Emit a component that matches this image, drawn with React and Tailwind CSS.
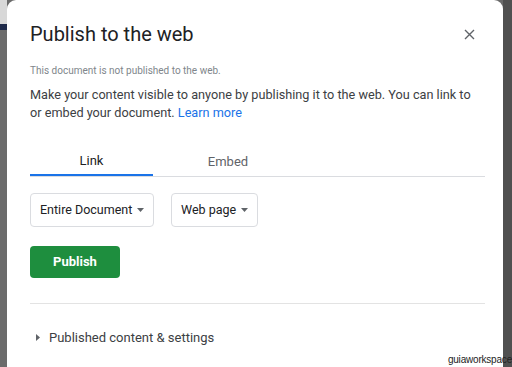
import React from "react";

function Caret() {
  return (
    <svg width="7" height="4" viewBox="0 0 7 4">
      <path d="M0 0h7L3.5 4z" fill="#5f6368" />
    </svg>
  );
}

function Dropdown({ label, width }) {
  return (
    <div
      className={`h-[34px] ${width} border border-[#dadce0] rounded-[4px] flex items-center justify-between pl-[9px] pr-[9px] text-[12.5px] text-[#202124] whitespace-nowrap`}
    >
      <span>{label}</span>
      <Caret />
    </div>
  );
}

export default function App() {
  return (
    <div
      className="relative w-[512px] h-[367px] flex bg-[#6b6b6b] overflow-hidden"
      style={{ fontFamily: "Roboto, 'Liberation Sans', sans-serif" }}
    >
      <div className="w-[7px] shrink-0 flex flex-col">
        <div className="h-[24px] bg-[#d8d8d8]" />
        <div className="h-[6px] bg-[#1f2a4a]" />
        <div className="flex-1 bg-[#6b6b6b]" />
      </div>

      <div className="w-[496px] shrink-0 bg-white rounded-t-[9px] pl-[23px] pr-[18px] flex flex-col">
        <div className="flex items-center justify-between pt-[20px]">
          <h1 className="text-[20px] leading-[28px] text-[#202124]">Publish to the web</h1>
          <svg width="11" height="11" viewBox="0 0 11 11" className="mr-[10px]">
            <path d="M1 1l9 9M10 1l-9 9" stroke="#5f6368" strokeWidth="1.4" />
          </svg>
        </div>

        <p className="mt-[16px] text-[10px] leading-[14px] text-[#80868b]">
          This document is not published to the web.
        </p>

        <p className="mt-[8px] text-[12.7px] leading-[18px] text-[#3c4043] whitespace-nowrap">
          Make your content visible to anyone by publishing it to the web. You can link to
          <br />
          or embed your document. <span className="text-[#1a73e8]">Learn more</span>
        </p>

        <div className="mt-[25px] flex border-b border-[#dadce0]">
          <div className="w-[123px] h-[29px] flex items-center justify-center text-[13px] text-[#202124] border-b-2 border-[#1a73e8] -mb-px">
            Link
          </div>
          <div className="w-[150px] h-[29px] flex items-center justify-center text-[13px] text-[#5f6368]">
            Embed
          </div>
        </div>

        <div className="mt-[16px] flex gap-[17px]">
          <Dropdown label="Entire Document" width="w-[124px]" />
          <Dropdown label="Web page" width="w-[87px]" />
        </div>

        <button className="mt-[19px] w-[90px] h-[32px] rounded-[4px] bg-[#1e8e3e] text-white text-[13px] font-bold">
          Publish
        </button>

        <div className="mt-[25px] h-px bg-[#e3e3e3]" />

        <div className="mt-[24px] flex items-center text-[13px] text-[#3c4043]">
          <svg width="4" height="7" viewBox="0 0 4 7" className="ml-[6px] mr-[9px]">
            <path d="M0 0v7l4-3.5z" fill="#5f6368" />
          </svg>
          <span>Published content &amp; settings</span>
        </div>
      </div>

      <div className="flex-1 bg-[#505050]" />

      <div
        className="absolute right-0 bottom-0 text-[10px] leading-[14px] tracking-[-0.2px] text-[#222]"
        style={{ fontFamily: "'Liberation Sans', sans-serif" }}
      >
        guiaworkspace
      </div>
    </div>
  );
}
